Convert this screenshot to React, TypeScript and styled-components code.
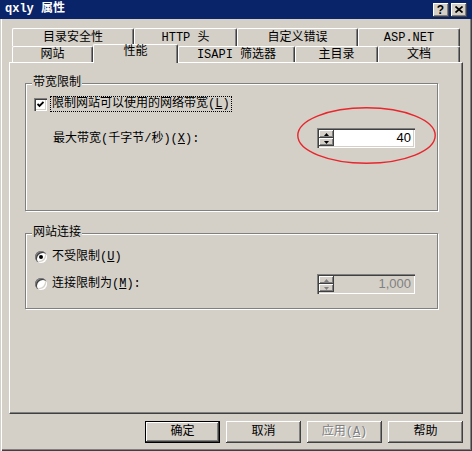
import React from 'react';
import styled, { createGlobalStyle, css } from 'styled-components';

const FACE = '#D4D0C8';
const SHADOW = '#808080';
const DARK = '#404040';

const Global = createGlobalStyle`
  html, body { margin: 0; padding: 0; background: ${FACE}; }
  body {
    font-family: "Liberation Mono", "Noto Sans CJK SC", monospace;
    font-size: 12px;
    color: #000;
  }
  * { box-sizing: border-box; }
`;

const Window = styled.div`
  width: 472px;
  height: 451px;
  display: flex;
  flex-direction: column;
  background: ${FACE};
  overflow: hidden;
`;

const TitleBar = styled.div`
  height: 19px;
  flex-shrink: 0;
  background: #0a246a;
  display: flex;
  align-items: center;
  padding: 0 5px 0 5px;
`;

const Title = styled.div`
  flex: 1;
  color: #fff;
  font-weight: bold;
  font-size: 12px;
  line-height: 19px;
`;

const CaptionButtons = styled.div`
  display: flex;
  gap: 2px;
  margin-top: 1px;
`;

const CaptionButton = styled.div`
  width: 16px;
  height: 14px;
  background: ${FACE};
  box-shadow: inset -1px -1px 0 ${DARK}, inset 1px 1px 0 #fff, inset -2px -2px 0 ${SHADOW};
  display: flex;
  align-items: center;
  justify-content: center;
  font-family: "Liberation Sans", sans-serif;
  font-weight: bold;
  font-size: 12px;
  line-height: 14px;
  padding-bottom: 1px;
  padding-right: 1px;
`;

const Frame = styled.div`
  flex: 1;
  display: flex;
  flex-direction: column;
  padding: 9px 9px 0 9px;
  box-shadow: inset 1px 0 0 ${FACE}, inset 2px 0 0 #fff, inset -1px -1px 0 ${DARK},
    inset -2px -2px 0 ${SHADOW};
`;

const TabStrip = styled.div`
  display: flex;
  flex-direction: column;
  margin: 0 3px;
`;

const TabRow = styled.div<{ $h: number }>`
  display: flex;
  height: ${(p) => p.$h}px;
`;

const Tab = styled.div<{ $w: number; $active?: boolean }>`
  width: ${(p) => p.$w}px;
  flex-shrink: 0;
  position: relative;
  display: flex;
  align-items: center;
  justify-content: center;
  background: ${FACE};
  border-top: 1px solid #fff;
  border-left: 1px solid #fff;
  border-right: 1px solid ${DARK};
  box-shadow: inset -1px 0 0 ${SHADOW};
  border-radius: 2px 2px 0 0;
  white-space: nowrap;
  line-height: 14px;
  padding-top: 1px;
  ${(p) =>
    p.$active &&
    css`
      z-index: 2;
      height: 19px;
      margin-top: -2px;
      margin-bottom: -1px;
      padding-top: 0;
      padding-bottom: 4px;
    `}
`;

const Panel = styled.div`
  height: 352px;
  flex-shrink: 0;
  background: ${FACE};
  border-top: 1px solid #fff;
  border-left: 1px solid #fff;
  border-right: 1px solid ${DARK};
  border-bottom: 1px solid ${DARK};
  box-shadow: inset -1px -1px 0 ${SHADOW};
  padding: 20px 24px 0 15px;
  display: flex;
  flex-direction: column;
`;

const GroupBox = styled.div<{ $h: number; $gap?: number; $pt: number; $pl: number }>`
  position: relative;
  height: ${(p) => p.$h}px;
  margin-top: ${(p) => p.$gap ?? 0}px;
  border: 1px solid ${SHADOW};
  box-shadow: 1px 1px 0 #fff, inset 1px 1px 0 #fff;
  display: flex;
  flex-direction: column;
  padding: ${(p) => p.$pt}px 22px 0 ${(p) => p.$pl}px;
`;

const GroupLabel = styled.span`
  position: absolute;
  top: -8px;
  left: 6px;
  padding: 0 1px;
  background: ${FACE};
  line-height: 14px;
`;

const CheckRow = styled.div`
  display: flex;
  align-items: center;
  height: 14px;
  gap: 3px;
`;

const CheckBox = styled.div`
  width: 13px;
  height: 13px;
  background: #fff;
  box-shadow: inset 1px 1px 0 ${SHADOW}, inset 2px 2px 0 ${DARK}, inset -1px -1px 0 #fff,
    inset -2px -2px 0 ${FACE};
  display: flex;
  align-items: center;
  justify-content: center;
`;

const FocusLabel = styled.span`
  border: 1px dotted #000;
  padding: 0 1px;
  line-height: 14px;
`;

const FieldRow = styled.div<{ $gap: number; $indent: number }>`
  display: flex;
  align-items: center;
  justify-content: space-between;
  height: 20px;
  margin-top: ${(p) => p.$gap}px;
  padding-left: ${(p) => p.$indent}px;
`;

const FieldLabel = styled.span`
  line-height: 14px;
  padding-top: 2px;
`;

const RadioRow = styled.div<{ $h: number; $gap?: number }>`
  display: flex;
  align-items: center;
  height: ${(p) => p.$h}px;
  margin-top: ${(p) => p.$gap ?? 0}px;
`;

const RadioLabel = styled.div`
  display: flex;
  align-items: center;
  gap: 5px;
  flex: 1;
  line-height: 14px;
`;

const Radio = styled.div<{ $checked?: boolean }>`
  width: 12px;
  height: 12px;
  border-radius: 50%;
  background: #fff;
  box-shadow: inset 1px 1px 0 ${SHADOW}, inset 2px 2px 0 ${DARK}, inset -1px -1px 0 #fff,
    inset -2px -2px 0 ${FACE};
  display: flex;
  align-items: center;
  justify-content: center;
  &::after {
    content: '';
    width: 4px;
    height: 4px;
    border-radius: 50%;
    background: ${(p) => (p.$checked ? '#000' : 'transparent')};
  }
`;

const SpinWrap = styled.div`
  position: relative;
`;

const SpinBox = styled.div<{ $disabled?: boolean }>`
  width: 98px;
  height: 20px;
  display: flex;
  padding: 2px;
  background: ${(p) => (p.$disabled ? FACE : '#fff')};
  box-shadow: inset 1px 1px 0 ${SHADOW}, inset 2px 2px 0 ${DARK}, inset -1px -1px 0 #fff,
    inset -2px -2px 0 ${FACE};
`;

const Spinner = styled.div`
  width: 15px;
  display: flex;
  flex-direction: column;
`;

const SpinButton = styled.div`
  height: 8px;
  background: ${FACE};
  box-shadow: inset -1px -1px 0 ${DARK}, inset 1px 1px 0 #fff, inset -2px -2px 0 ${SHADOW};
  display: flex;
  align-items: center;
  justify-content: center;
  padding-right: 1px;
`;

const SpinValue = styled.div<{ $disabled?: boolean }>`
  flex: 1;
  text-align: right;
  padding-right: 2px;
  font-family: "Liberation Sans", sans-serif;
  font-size: 13px;
  line-height: 16px;
  color: ${(p) => (p.$disabled ? SHADOW : '#000')};
`;

const Ellipse = styled.svg`
  position: absolute;
  left: -20px;
  top: -21px;
  width: 139px;
  height: 57px;
  overflow: visible;
  pointer-events: none;
`;

const ButtonRow = styled.div`
  display: flex;
  justify-content: flex-end;
  gap: 6px;
  margin-top: 7px;
`;

const Button = styled.div<{ $default?: boolean; $disabled?: boolean }>`
  width: 75px;
  height: 22px;
  display: flex;
  align-items: center;
  justify-content: center;
  background: ${FACE};
  line-height: 14px;
  box-shadow: inset -1px -1px 0 ${DARK}, inset 1px 1px 0 #fff, inset -2px -2px 0 ${SHADOW};
  ${(p) =>
    p.$default &&
    css`
      box-shadow: inset 0 0 0 1px #000, inset -2px -2px 0 ${DARK}, inset 2px 2px 0 #fff,
        inset -3px -3px 0 ${SHADOW};
    `}
  ${(p) =>
    p.$disabled &&
    css`
      color: ${SHADOW};
      text-shadow: 1px 1px 0 #fff;
    `}
`;

const Arrow = ({ up, disabled }: { up?: boolean; disabled?: boolean }) => (
  <svg width="5" height="3" viewBox="0 0 5 3">
    <path
      d={up ? 'M2.5 0 L5 3 L0 3 Z' : 'M0 0 L5 0 L2.5 3 Z'}
      fill={disabled ? SHADOW : '#000'}
    />
  </svg>
);

const Spin = ({ value, disabled }: { value: string; disabled?: boolean }) => (
  <SpinBox $disabled={disabled}>
    <Spinner>
      <SpinButton>
        <Arrow up disabled={disabled} />
      </SpinButton>
      <SpinButton>
        <Arrow disabled={disabled} />
      </SpinButton>
    </Spinner>
    <SpinValue $disabled={disabled}>{value}</SpinValue>
  </SpinBox>
);

const backTabs: [string, number][] = [
  ['目录安全性', 122],
  ['HTTP 头', 103],
  ['自定义错误', 121],
  ['ASP.NET', 102],
];

const frontTabs: [string, number, boolean?][] = [
  ['网站', 81],
  ['性能', 85, true],
  ['ISAPI 筛选器', 117],
  ['主目录', 83],
  ['文档', 82],
];

export default function App() {
  return (
    <>
      <Global />
      <Window>
        <TitleBar>
          <Title>qxly 属性</Title>
          <CaptionButtons>
            <CaptionButton>?</CaptionButton>
            <CaptionButton>
              <svg width="8" height="7" viewBox="0 0 8 7">
                <path d="M0.5 0.5 L7.5 6.5 M7.5 0.5 L0.5 6.5" stroke="#000" strokeWidth="1.7" />
              </svg>
            </CaptionButton>
          </CaptionButtons>
        </TitleBar>
        <Frame>
          <TabStrip>
            <TabRow $h={18}>
              {backTabs.map(([t, w]) => (
                <Tab key={t} $w={w}>
                  {t}
                </Tab>
              ))}
            </TabRow>
            <TabRow $h={16}>
              {frontTabs.map(([t, w, a]) => (
                <Tab key={t} $w={w} $active={a}>
                  {t}
                </Tab>
              ))}
            </TabRow>
          </TabStrip>
          <Panel>
            <GroupBox $h={128} $pt={13} $pl={8}>
              <GroupLabel>带宽限制</GroupLabel>
              <CheckRow>
                <CheckBox>
                  <svg width="7" height="7" viewBox="0 0 7 7">
                    <path d="M0.5 3 L2.5 5 L6.5 1" stroke="#000" strokeWidth="1.8" fill="none" />
                  </svg>
                </CheckBox>
                <FocusLabel>
                  限制网站可以使用的网络带宽(<u>L</u>)
                </FocusLabel>
              </CheckRow>
              <FieldRow $gap={17} $indent={19}>
                <FieldLabel>
                  最大带宽(千字节/秒)(<u>X</u>):
                </FieldLabel>
                <SpinWrap>
                  <Spin value="40" />
                  <Ellipse viewBox="0 0 139 57">
                    <ellipse
                      cx="69.5"
                      cy="28.5"
                      rx="68.7"
                      ry="27.7"
                      fill="none"
                      stroke="#E8262C"
                      strokeWidth="1.4"
                    />
                  </Ellipse>
                </SpinWrap>
              </FieldRow>
            </GroupBox>
            <GroupBox $h={76} $gap={22} $pt={16} $pl={9}>
              <GroupLabel>网站连接</GroupLabel>
              <RadioRow $h={14}>
                <RadioLabel>
                  <Radio $checked />
                  <span>
                    不受限制(<u>U</u>)
                  </span>
                </RadioLabel>
              </RadioRow>
              <RadioRow $h={20} $gap={10}>
                <RadioLabel>
                  <Radio />
                  <span>
                    连接限制为(<u>M</u>):
                  </span>
                </RadioLabel>
                <Spin value="1,000" disabled />
              </RadioRow>
            </GroupBox>
          </Panel>
          <ButtonRow>
            <Button $default>确定</Button>
            <Button>取消</Button>
            <Button $disabled>
              应用(<u>A</u>)
            </Button>
            <Button>帮助</Button>
          </ButtonRow>
        </Frame>
      </Window>
    </>
  );
}
